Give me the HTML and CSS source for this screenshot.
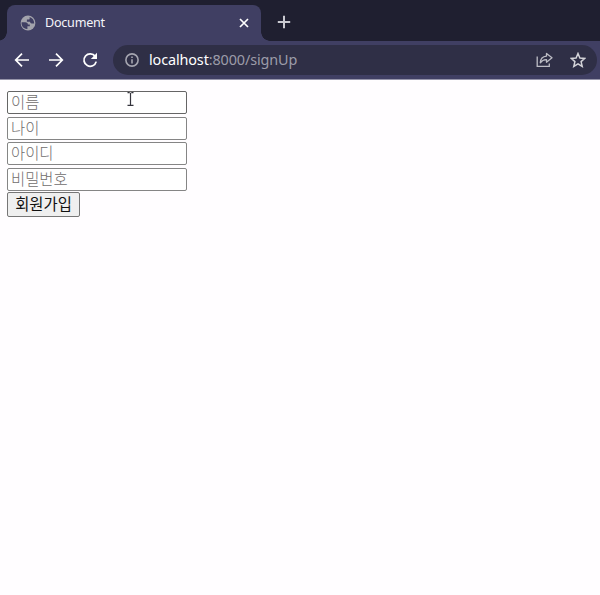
FILE: index.html
```html
<!DOCTYPE html>
<html lang="ko">
<head>
<meta charset="utf-8">
<title>Document</title>
<link rel="stylesheet" href="styles.css">
</head>
<body>
<header class="tabstrip">
  <div class="tab">
    <svg class="globe" viewBox="0 0 16 16"><circle cx="8" cy="8" r="7.4" fill="#a3a3ac"/><path d="M1.6 7.3H5.2C7 7.3 7.9 8.2 7.9 9.6H9.8V11.2H7.4V13.9C3.8 14.2 1.2 11 1.6 7.3Z M9.6 1.9C12.4 2.7 14.2 5.2 14.2 8.4H11.6C10.6 8.4 10 7.6 10 6.8H6.9V4.4H8.7C9.5 4.4 9.9 3.8 9.6 1.9Z" fill="#403f63"/></svg>
    <span class="tab-title">Document</span>
    <svg class="close" viewBox="0 0 10 10"><path d="M1 1 9 9M9 1 1 9" fill="none" stroke="#fff" stroke-width="1.7"/></svg>
  </div>
  <svg class="plus" viewBox="0 0 14 14"><path d="M7 .8V13.2M.8 7H13.2" fill="none" stroke="#c9c9d0" stroke-width="2"/></svg>
</header>
<nav class="toolbar">
  <svg class="nav-icon" viewBox="0 0 16 16"><path d="M15 8H2M8 1.7 1.7 8 8 14.3" fill="none" stroke="#fff" stroke-width="1.7"/></svg>
  <svg class="nav-icon" viewBox="0 0 16 16"><path d="M1 8H14M8 1.7 14.3 8 8 14.3" fill="none" stroke="#fff" stroke-width="1.7"/></svg>
  <svg class="nav-icon" viewBox="0 0 16 16"><path d="M13.2 4.4A6.2 6.2 0 1 0 14.2 9.6" fill="none" stroke="#fff" stroke-width="1.8"/><path d="M15 .8V7H8.8Z" fill="#fff"/></svg>
  <div class="address">
    <svg class="info" viewBox="0 0 14 14"><circle cx="7" cy="7" r="6.1" fill="none" stroke="#a5a5b0" stroke-width="1.6"/><path d="M7 6.2V10.4M7 3.5V5" stroke="#a5a5b0" stroke-width="1.6"/></svg>
    <span class="url"><span class="host">localhost</span>:8000/signUp</span>
    <svg class="share" viewBox="0 0 17 16"><path d="M1.2 4.5V14.3H13.3V11.5" fill="none" stroke="#bdbdc5" stroke-width="1.3"/><path d="M10.5 1.5 16 5.8 10.5 10.2V7.6C7.7 7.5 5.8 8.5 4.3 10.8C4.5 7 6.8 4.4 10.5 4.1Z" fill="none" stroke="#bdbdc5" stroke-width="1.3" stroke-linejoin="round"/></svg>
    <svg class="star" viewBox="0 0 16 16"><path d="M8 1.5 9.9 6 14.8 6.4 11.1 9.6 12.2 14.4 8 11.8 3.8 14.4 4.9 9.6 1.2 6.4 6.1 6Z" fill="none" stroke="#d3d3d8" stroke-width="1.5"/></svg>
  </div>
</nav>
<main class="page">
  <form class="signup">
    <input class="field hovered" type="text" placeholder="이름">
    <input class="field" type="text" placeholder="나이">
    <input class="field" type="text" placeholder="아이디">
    <input class="field" type="password" placeholder="비밀번호">
    <button class="submit" type="button">회원가입</button>
  </form>
  <svg class="cursor" viewBox="0 0 7 14"><path d="M.5 .7H2.7M4.3 .7H6.5M3.5 .7V13.3M.5 13.3H6.5" fill="none" stroke="#35353d" stroke-width="1.2"/></svg>
</main>
</body>
</html>
```
FILE: styles.css
```css
* { box-sizing: border-box; }
body {
  margin: 0;
  height: 595px;
  overflow: hidden;
  background: #fffdff;
  font-family: "Open Sans", "Noto Sans CJK KR", sans-serif;
}
svg { display: block; flex: none; }
.tabstrip {
  height: 41px;
  padding: 5px 0 0 7px;
  display: flex;
  background: #1f1f30;
}
.tab {
  position: relative;
  width: 254px;
  height: 36px;
  padding: 0 12px 0 13px;
  display: flex;
  align-items: center;
  background: #403f63;
  border-radius: 8px 8px 0 0;
}
.tab::before, .tab::after {
  content: "";
  position: absolute;
  bottom: 0;
  width: 9px;
  height: 9px;
}
.tab::before { left: -9px; background: radial-gradient(circle at 0 0, transparent 8.5px, #403f63 9px); }
.tab::after { right: -9px; background: radial-gradient(circle at 100% 0, transparent 8.5px, #403f63 9px); }
.globe { width: 16px; height: 16px; margin-top: -1px; }
.tab-title {
  flex: 1;
  margin: -2px 0 0 9px;
  color: #f5f5fa;
  font-family: "Noto Sans", sans-serif;
  font-size: 12.6px;
  letter-spacing: -0.25px;
}
.close { width: 10px; height: 10px; margin-top: -1px; }
.plus { width: 14px; height: 14px; margin: 10px 0 0 16px; }
.toolbar {
  height: 39px;
  padding: 0 3px 0 13.5px;
  display: flex;
  align-items: center;
  background: #403f63;
  border-bottom: 1px solid #9695aa;
}
.nav-icon { width: 16px; height: 16px; margin-right: 18px; }
.nav-icon:nth-child(3) { margin-right: 15.5px; }
.address {
  flex: 1;
  height: 30px;
  padding: 0 11px 0 12px;
  display: flex;
  align-items: center;
  background: #2f2f46;
  border-radius: 15px;
}
.info { width: 14px; height: 14px; }
.url {
  flex: 1;
  margin: -1px 0 0 10px;
  color: #9c9ca9;
  font-family: "Noto Sans", sans-serif;
  font-size: 14.4px;
  letter-spacing: -0.12px;
}
.host { color: #fff; }
.share { width: 17px; height: 16px; margin-right: 17px; }
.star { width: 16px; height: 16px; }
.page { position: relative; padding: 11px 7px; }
.signup { display: flex; flex-direction: column; align-items: flex-start; }
.field {
  width: 180px;
  height: 23px;
  margin: 0 0 2.6px;
  padding: 0 3px 3px;
  border: 1px solid #858585;
  border-radius: 2px;
  background: #fff;
  font: 15.4px/19px "Noto Sans CJK KR", sans-serif;
}
.hovered { border-color: #656565; }
.field::placeholder { color: #706d6d; font-weight: 300; }
.submit {
  width: 73px;
  height: 25px;
  margin-top: -1.4px;
  padding: 0 0 3px;
  border: 1px solid #767676;
  border-radius: 2px;
  background: #efefef;
  color: #111;
  font: 15.4px/20px "Noto Sans CJK KR", sans-serif;
}
.cursor { position: absolute; left: 126.5px; top: 12px; width: 7px; height: 14px; }
```
